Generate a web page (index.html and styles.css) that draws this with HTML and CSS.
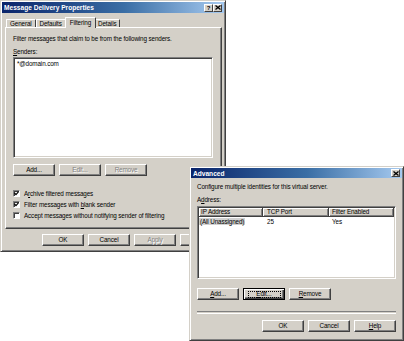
FILE: index.html
```html
<html>
<head>
    <title>Message Delivery Properties</title>
    <link rel="stylesheet" href="styles.css">
</head>
<body>
<div class="desk">
    <div class="win main">
        <div class="title">
            <span class="title-text">Message Delivery Properties</span>
            <span class="cap-btns">
                <span class="cap-btn">?</span>
                <span class="cap-btn"><svg width="6" height="5" viewBox="0 0 6 5"><path d="M0.5 0.5 L5.5 4.5 M5.5 0.5 L0.5 4.5" stroke="#000" stroke-width="1.3"/></svg></span>
            </span>
        </div>
        <div class="win-body">
            <div class="tabs">
                <span class="tab">General</span>
                <span class="tab">Defaults</span>
                <span class="tab sel">Filtering</span>
                <span class="tab">Details</span>
            </div>
            <div class="panel">
                <div class="line">Filter messages that claim to be from the following senders.</div>
                <div class="line gap5"><u>S</u>enders:</div>
                <div class="listbox senders">
                    <div class="item">*@domain.com</div>
                </div>
                <div class="btn-row">
                    <span class="btn">Add...</span>
                    <span class="btn off">Edit...</span>
                    <span class="btn off">Remove</span>
                </div>
                <div class="checks">
                    <div class="check"><span class="box"><svg width="5" height="5" viewBox="0 0 5 5"><path d="M0.5 2 L2 3.7 L4.6 0.6" stroke="#000" stroke-width="1.2" fill="none"/></svg></span><span>A<u>r</u>chive filtered messages</span></div>
                    <div class="check"><span class="box"><svg width="5" height="5" viewBox="0 0 5 5"><path d="M0.5 2 L2 3.7 L4.6 0.6" stroke="#000" stroke-width="1.2" fill="none"/></svg></span><span>Filter messages with <u>b</u>lank sender</span></div>
                    <div class="check"><span class="box"></span><span>Accept messages without notifying sender of filtering</span></div>
                </div>
            </div>
            <div class="actions">
                <span class="btn">OK</span>
                <span class="btn">Cancel</span>
                <span class="btn off">Apply</span>
                <span class="btn">Help</span>
            </div>
        </div>
    </div>

    <div class="win adv">
        <div class="title">
            <span class="title-text">Advanced</span>
            <span class="cap-btns">
                <span class="cap-btn"><svg width="6" height="5" viewBox="0 0 6 5"><path d="M0.5 0.5 L5.5 4.5 M5.5 0.5 L0.5 4.5" stroke="#000" stroke-width="1.3"/></svg></span>
            </span>
        </div>
        <div class="win-body adv-body">
            <div class="line">Configure multiple identities for this virtual server.</div>
            <div class="line gap5">A<u>d</u>dress:</div>
            <div class="listbox listview">
                <div class="lv-head">
                    <span class="lv-col c1">IP Address</span>
                    <span class="lv-col c2">TCP Port</span>
                    <span class="lv-col c3">Filter Enabled</span>
                </div>
                <div class="lv-row">
                    <span class="lv-cell c1"><span class="picked">(All Unassigned)</span></span>
                    <span class="lv-cell c2">25</span>
                    <span class="lv-cell c3">Yes</span>
                </div>
            </div>
            <div class="btn-row adv-btns">
                <span class="btn"><u>A</u>dd...</span>
                <span class="btn focus"><span class="focus-ring"><u>E</u>dit...</span></span>
                <span class="btn"><u>R</u>emove</span>
            </div>
            <div class="sep"></div>
            <div class="actions adv-actions">
                <span class="btn">OK</span>
                <span class="btn">Cancel</span>
                <span class="btn"><u>H</u>elp</span>
            </div>
        </div>
    </div>
</div>
</body>
</html>
```

FILE: styles.css
```css
body {
    margin: 0;
    background-color: white;
    font-family: "Liberation Sans", Arial, sans-serif;
    font-size: 6.3px;
    letter-spacing: -0.12px;
    color: black;
}

.desk {
    position: relative;
    width: 404px;
    height: 341px;
    overflow: hidden;
}

/* window frame */
.win {
    box-sizing: border-box;
    background-color: #d4d0c8;
    border: 1px solid;
    border-color: #d4d0c8 #404040 #404040 #d4d0c8;
    box-shadow: inset 1px 1px #ffffff, inset -1px -1px #808080;
    padding: 1px;
    display: flex;
    flex-direction: column;
}

.main {
    width: 226px;
    height: 252px;
}

.adv {
    position: absolute;
    left: 189px;
    top: 166px;
    width: 215px;
    height: 175px;
}

.title {
    height: 11px;
    background: linear-gradient(90deg, #0a246a, #3a6ea5 55%, #a6caf0);
    display: flex;
    align-items: center;
    justify-content: space-between;
    padding: 0 2px 0 2px;
}

.adv .title {
    height: 10px;
}

.title-text {
    color: white;
    font-weight: bold;
    font-size: 6.6px;
    letter-spacing: 0;
}

.cap-btns {
    display: flex;
}

.cap-btn {
    box-sizing: border-box;
    width: 9px;
    height: 8px;
    background-color: #d4d0c8;
    border: 1px solid;
    border-color: #ffffff #404040 #404040 #ffffff;
    display: flex;
    align-items: center;
    justify-content: center;
    font-weight: bold;
    font-size: 6px;
    line-height: 6px;
}

.win-body {
    padding: 0 2px 0 3px;
}

/* tabs */
.tabs {
    display: flex;
    align-items: flex-end;
    height: 10px;
    margin-top: 4px;
    padding-left: 1px;
}

.tab {
    box-sizing: border-box;
    height: 8px;
    line-height: 7px;
    padding: 0 3px;
    border: 1px solid;
    border-bottom: none;
    border-color: #ffffff #404040 #404040 #ffffff;
    border-radius: 1px 1px 0 0;
}

.tab.sel {
    height: 11px;
    line-height: 9px;
    margin: 0 -1px -1px -1px;
    padding: 0 4px;
    position: relative;
    z-index: 1;
    background-color: #d4d0c8;
}

.tab.sel + .tab {
    border-left: none;
}

.panel {
    box-sizing: border-box;
    height: 202px;
    border: 1px solid;
    border-color: #ffffff #404040 #404040 #ffffff;
    box-shadow: inset -1px -1px #808080;
    padding: 7px 8px 0 7px;
}

.line {
    line-height: 8px;
    white-space: nowrap;
}

.gap5 {
    margin-top: 5px;
}

u {
    text-decoration: underline;
    text-underline-offset: 1px;
}

/* sunken boxes */
.listbox {
    box-sizing: border-box;
    background-color: white;
    border: 1px solid;
    border-color: #808080 #ffffff #ffffff #808080;
    box-shadow: inset 1px 1px #404040, inset -1px -1px #d4d0c8;
}

.senders {
    height: 101px;
    margin-top: 1px;
    padding: 2px 3px;
}

.item {
    line-height: 8px;
}

/* buttons */
.btn-row {
    display: flex;
    gap: 4px;
    margin-top: 6px;
}

.btn {
    box-sizing: border-box;
    width: 42px;
    height: 12px;
    background-color: #d4d0c8;
    border: 1px solid;
    border-color: #ffffff #404040 #404040 #ffffff;
    box-shadow: inset -1px -1px #808080;
    display: flex;
    align-items: center;
    justify-content: center;
    line-height: 8px;
}

.btn.off {
    color: #808080;
    text-shadow: 1px 1px #ffffff;
}

.btn.focus {
    border-color: #000000;
    box-shadow: inset 1px 1px #ffffff, inset -1px -1px #404040, inset -2px -2px #808080;
}

.focus-ring {
    box-sizing: border-box;
    width: 33px;
    height: 7px;
    border: 1px dotted #000000;
    display: flex;
    align-items: center;
    justify-content: center;
    line-height: 6px;
}

/* checkboxes */
.checks {
    margin-top: 12px;
}

.check {
    height: 11px;
    display: flex;
    align-items: center;
    white-space: nowrap;
}

.box {
    box-sizing: border-box;
    width: 7px;
    height: 7px;
    margin-right: 4px;
    background-color: white;
    border: 1px solid;
    border-color: #808080 #ffffff #ffffff #808080;
    box-shadow: inset 1px 1px #404040;
    display: flex;
    align-items: center;
    justify-content: center;
}

.actions {
    display: flex;
    justify-content: flex-end;
    gap: 4px;
    margin-top: 5px;
}

/* advanced dialog */
.adv-body {
    padding: 0 6px;
}

.adv-body > .line:first-child {
    margin-top: 5px;
}

.listview {
    height: 73px;
    margin-top: 2px;
    padding: 1px;
}

.lv-head {
    display: flex;
    height: 9px;
}

.lv-col {
    box-sizing: border-box;
    height: 9px;
    line-height: 7px;
    padding-left: 2px;
    background-color: #d4d0c8;
    border-right: 1px solid #404040;
    border-bottom: 1px solid #404040;
    box-shadow: inset 1px 1px #ffffff, inset -1px -1px #808080;
}

.c1 {
    width: 64px;
}

.c2 {
    width: 66px;
    padding-left: 4px;
}

.c3 {
    width: 65px;
    padding-left: 3px;
}

.lv-row {
    display: flex;
    height: 8px;
    margin-top: 1px;
    line-height: 8px;
}

.lv-cell {
    box-sizing: border-box;
}

.picked {
    background-color: #d0d0d0;
    padding: 0 1px;
}

.adv-btns {
    margin-top: 9px;
}

.sep {
    height: 1px;
    margin-top: 11px;
    border-top: 1px solid #808080;
    border-bottom: 1px solid #ffffff;
}

.adv-actions {
    margin-top: 6px;
}
```
